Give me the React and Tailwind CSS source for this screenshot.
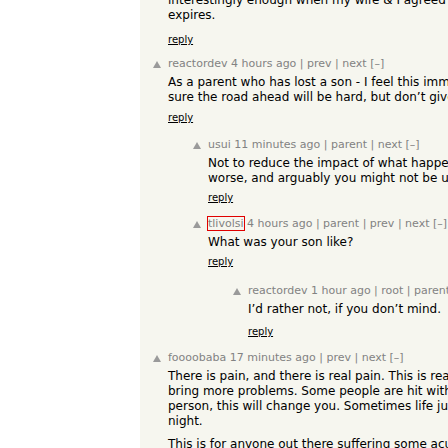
import React from "react";

function Tri() {
  return (
    <svg width="8" height="7" viewBox="0 0 8 7" className="block">
      <polygon points="4,0 8,7 0,7" fill="#9a9a9a" />
    </svg>
  );
}

function Meta({ user, rest, boxed }) {
  return (
    <div className="text-[11px] leading-[13px] text-[#828282] whitespace-nowrap">
      {boxed ? (
        <span className="outline outline-1 outline-[#e00000]">{user}</span>
      ) : (
        <span>{user}</span>
      )}{" "}
      {rest}
    </div>
  );
}

function Reply({ mt }) {
  return (
    <div className={`text-[10px] leading-[12px] text-black ${mt}`}>
      <span className="underline">reply</span>
    </div>
  );
}

export default function App() {
  return (
    <div className="w-[448px] h-[448px] overflow-hidden bg-white flex font-['DejaVu_Sans',Verdana,sans-serif]">
      <div className="w-[140px] shrink-0 bg-white" />
      <div className="flex-1 bg-[#f6f6ef] overflow-hidden">
        {/* tail of previous top-level comment */}
        <div className="pl-[28px]">
          <div className="mt-[-7px] text-[12px] leading-[15px] text-black whitespace-nowrap">
            interestingly enough when my wife &amp; I agreed to
            <br />
            expires.
          </div>
          <Reply mt="mt-[11px]" />
        </div>

        {/* reactordev */}
        <div className="flex mt-[11px]">
          <div className="w-[28px] shrink-0 pl-[13px] pt-[4px]">
            <Tri />
          </div>
          <div className="min-w-0">
            <Meta user="reactordev" rest="4 hours ago | prev | next [–]" />
            <div className="mt-[5px] text-[12px] leading-[15px] text-black whitespace-nowrap">
              As a parent who has lost a son - I feel this immensely. I can
              <br />
              sure the road ahead will be hard, but don’t give up hope.
            </div>
            <Reply mt="mt-[7px]" />
          </div>
        </div>

        {/* usui */}
        <div className="flex mt-[14px] pl-[40px]">
          <div className="w-[28px] shrink-0 pl-[13px] pt-[4px]">
            <Tri />
          </div>
          <div className="min-w-0">
            <Meta user="usui" rest="11 minutes ago | parent | next [–]" />
            <div className="mt-[5px] text-[12px] leading-[15px] text-black whitespace-nowrap">
              Not to reduce the impact of what happened to you, but
              <br />
              worse, and arguably you might not be used to it.
            </div>
            <Reply mt="mt-[6px]" />
          </div>
        </div>

        {/* tlivolsi */}
        <div className="flex mt-[13px] pl-[40px]">
          <div className="w-[28px] shrink-0 pl-[13px] pt-[4px]">
            <Tri />
          </div>
          <div className="min-w-0">
            <Meta user="tlivolsi" boxed rest="4 hours ago | parent | prev | next [–]" />
            <div className="mt-[5px] text-[12px] leading-[15px] text-black whitespace-nowrap">
              What was your son like?
            </div>
            <Reply mt="mt-[6px]" />
          </div>
        </div>

        {/* reactordev nested */}
        <div className="flex mt-[16px] pl-[80px]">
          <div className="w-[28px] shrink-0 pl-[13px] pt-[4px]">
            <Tri />
          </div>
          <div className="min-w-0">
            <Meta user="reactordev" rest="1 hour ago | root | parent | next [–]" />
            <div className="mt-[5px] text-[12px] leading-[15px] text-black whitespace-nowrap">
              I’d rather not, if you don’t mind.
            </div>
            <Reply mt="mt-[9px]" />
          </div>
        </div>

        {/* foooobaba */}
        <div className="flex mt-[13px]">
          <div className="w-[28px] shrink-0 pl-[13px] pt-[4px]">
            <Tri />
          </div>
          <div className="min-w-0">
            <Meta user="foooobaba" rest="17 minutes ago | prev | next [–]" />
            <div className="mt-[5px] text-[12px] leading-[15px] text-black whitespace-nowrap">
              There is pain, and there is real pain. This is real pain, and it will
              <br />
              bring more problems. Some people are hit with it harder than others.
              <br />
              person, this will change you. Sometimes life just isn’t fair. Get
              <br />
              night.
            </div>
            <div className="mt-[8px] text-[12px] leading-[15px] text-black whitespace-nowrap">
              This is for anyone out there suffering some acute loss
            </div>
          </div>
        </div>
      </div>
    </div>
  );
}
